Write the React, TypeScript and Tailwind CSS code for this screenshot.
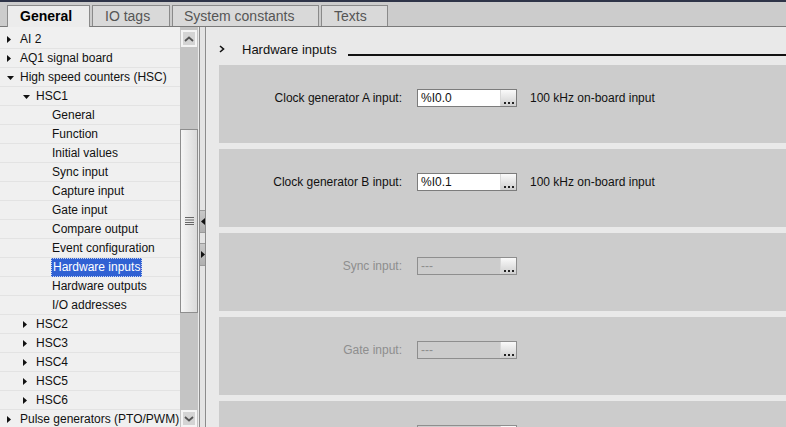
import React from "react";

type Row = { lvl: 0 | 1 | 2; tri?: "r" | "d"; text: string; sel?: boolean };

const rows: Row[] = [
  { lvl: 0, tri: "r", text: "AI 2" },
  { lvl: 0, tri: "r", text: "AQ1 signal board" },
  { lvl: 0, tri: "d", text: "High speed counters (HSC)" },
  { lvl: 1, tri: "d", text: "HSC1" },
  { lvl: 2, text: "General" },
  { lvl: 2, text: "Function" },
  { lvl: 2, text: "Initial values" },
  { lvl: 2, text: "Sync input" },
  { lvl: 2, text: "Capture input" },
  { lvl: 2, text: "Gate input" },
  { lvl: 2, text: "Compare output" },
  { lvl: 2, text: "Event configuration" },
  { lvl: 2, text: "Hardware inputs", sel: true },
  { lvl: 2, text: "Hardware outputs" },
  { lvl: 2, text: "I/O addresses" },
  { lvl: 1, tri: "r", text: "HSC2" },
  { lvl: 1, tri: "r", text: "HSC3" },
  { lvl: 1, tri: "r", text: "HSC4" },
  { lvl: 1, tri: "r", text: "HSC5" },
  { lvl: 1, tri: "r", text: "HSC6" },
  { lvl: 0, tri: "r", text: "Pulse generators (PTO/PWM)" },
];

function Tri({ dir }: { dir: "r" | "d" }) {
  return dir === "r" ? (
    <svg width="16" height="19" viewBox="0 0 16 19">
      <path d="M3 6 L7 9.5 L3 13 Z" fill="#111" />
    </svg>
  ) : (
    <svg width="16" height="19" viewBox="0 0 16 19">
      <path d="M3 8 L10 8 L6.5 12 Z" fill="#111" />
    </svg>
  );
}

function TreeRow({ r }: { r: Row }) {
  const pl = r.lvl === 0 ? "pl-[4px]" : r.lvl === 1 ? "pl-[20px]" : "pl-[51px]";
  return (
    <div className={`h-[19px] shrink-0 border-b border-[#e3e3e3] flex items-center ${pl}`}>
      {r.tri && <Tri dir={r.tri} />}
      {r.sel ? (
        <span className="h-[19px] px-[1px] flex items-center bg-[#3061d3] text-white border border-dotted border-[#c8d4f0] leading-none">
          {r.text}
        </span>
      ) : (
        <span className={r.lvl === 2 ? "pl-[1px]" : ""}>{r.text}</span>
      )}
    </div>
  );
}

function Dots() {
  return (
    <svg width="16" height="16" viewBox="0 0 16 16">
      <rect x="3" y="12" width="2" height="2" fill="#222" />
      <rect x="7" y="12" width="2" height="2" fill="#222" />
      <rect x="11" y="12" width="2" height="2" fill="#222" />
    </svg>
  );
}

function Field({
  label,
  value,
  note,
  disabled,
}: {
  label: string;
  value: string;
  note?: string;
  disabled?: boolean;
}) {
  const c = disabled ? "text-[#8e8e8e]" : "text-[#111]";
  return (
    <div className="h-[78px] mb-[6px] shrink-0 bg-[#cccccc] pt-[24px]">
      <div className="h-[18px] flex items-center">
        <div className={`w-[183px] text-right ${c}`}>{label}</div>
        <div
          className={`ml-[15px] w-[100px] h-[18px] flex border ${
            disabled ? "border-[#8e8e8e] bg-[#cccccc]" : "border-[#7c7c7c] bg-white"
          }`}
        >
          <div className={`flex-1 pl-[3px] leading-[16px] ${c}`}>{value}</div>
          <div className="w-[16px] h-full bg-gradient-to-b from-[#fafafa] to-[#cfcfcf] border-l border-[#d8d8d8]">
            <Dots />
          </div>
        </div>
        {note && <div className="ml-[13px] text-[#111]">{note}</div>}
      </div>
    </div>
  );
}

export default function App() {
  return (
    <div
      className="w-[786px] h-[427px] overflow-hidden flex flex-col bg-[#e9e9e9] text-[12px]"
      style={{ fontFamily: '"Liberation Sans", Arial, sans-serif' }}
    >
      <div className="h-[2px] bg-[#2e3448] shrink-0" />
      <div className="h-[25px] shrink-0 bg-[#cccccc] border-b border-[#7a7a7a] flex items-end pl-[7px] gap-[2px] text-[14px]">
        <div className="w-[83px] h-[22px] -mb-px bg-[#ececec] border border-b-0 border-[#8a8a8a] pl-[12px] flex items-center font-bold text-black">
          General
        </div>
        <div className="w-[78px] h-[21px] bg-[#d9d9d9] border border-b-0 border-[#8a8a8a] pl-[12px] flex items-center text-[#555]">
          IO tags
        </div>
        <div className="w-[147px] h-[21px] bg-[#d9d9d9] border border-b-0 border-[#8a8a8a] pl-[11px] flex items-center text-[#555]">
          System constants
        </div>
        <div className="w-[67px] h-[21px] bg-[#d9d9d9] border border-b-0 border-[#8a8a8a] pl-[12px] flex items-center text-[#555]">
          Texts
        </div>
      </div>

      <div className="flex flex-1 min-h-0">
        {/* Tree */}
        <div className="w-[180px] shrink-0 bg-[#f0f0f0] pt-[3px] flex flex-col overflow-hidden text-[#111]">
          {rows.map((r, i) => (
            <TreeRow key={i} r={r} />
          ))}
        </div>

        {/* Scrollbar */}
        <div className="w-[18px] shrink-0 bg-[#c4c4c4] flex flex-col pt-[3px]">
          <div className="h-[17px] mx-[1px] border-2 border-[#f4f4f4] bg-[#d4d4d4] flex items-center justify-center">
            <svg width="10" height="6" viewBox="0 0 10 6">
              <path d="M1 5 L5 1.5 L9 5" stroke="#555" strokeWidth="1.8" fill="none" />
            </svg>
          </div>
          <div className="h-[82px] shrink-0" />
          <div className="h-[184px] shrink-0 border border-[#8e8e8e] bg-gradient-to-r from-[#f6f6f6] to-[#dadada] flex items-center justify-center">
            <svg width="9" height="8" viewBox="0 0 9 8">
              <path d="M0 0.5 H9 M0 3 H9 M0 5.5 H9 M0 7.5 H9" stroke="#666" strokeWidth="1" />
            </svg>
          </div>
          <div className="flex-1" />
          <div className="h-[17px] mx-[1px] border-2 border-[#f4f4f4] bg-[#d4d4d4] flex items-center justify-center">
            <svg width="10" height="6" viewBox="0 0 10 6">
              <path d="M1 1 L5 4.5 L9 1" stroke="#555" strokeWidth="1.8" fill="none" />
            </svg>
          </div>
        </div>

        {/* Splitter */}
        <div className="w-[9px] shrink-0 bg-[#ebebeb] pl-[1px] pr-[1px]">
          <div className="h-full border-x border-[#8c8c8c] bg-[#e4e4e4] flex flex-col">
            <div className="h-[183px] shrink-0" />
            <div className="h-[23px] shrink-0 bg-gradient-to-b from-[#c8c8c8] to-[#b0b0b0] border-y border-[#9a9a9a] flex items-center justify-center">
              <svg width="4" height="7" viewBox="0 0 4 7">
                <path d="M4 0 L0 3.5 L4 7 Z" fill="#111" />
              </svg>
            </div>
            <div className="h-[10px] shrink-0" />
            <div className="h-[23px] shrink-0 bg-gradient-to-b from-[#c8c8c8] to-[#b0b0b0] border-y border-[#9a9a9a] flex items-center justify-center">
              <svg width="4" height="7" viewBox="0 0 4 7">
                <path d="M0 0 L4 3.5 L0 7 Z" fill="#111" />
              </svg>
            </div>
          </div>
        </div>

        {/* Right panel */}
        <div className="flex-1 min-w-0 pl-[12px] flex flex-col overflow-hidden">
          <div className="h-[38px] shrink-0 flex items-start pt-[15px]">
            <svg width="6" height="8" viewBox="0 0 6 8" className="mt-[3px]">
              <path d="M1 1 L4.5 4 L1 7" stroke="#111" strokeWidth="1.6" fill="none" />
            </svg>
            <span className="ml-[17px] text-[13px] leading-[15px] text-[#111]">Hardware inputs</span>
            <div className="flex-1 ml-[11px] mt-[12px] h-[2px] bg-[#111]" />
          </div>
          <Field label="Clock generator A input:" value="%I0.0" note="100 kHz on-board input" />
          <Field label="Clock generator B input:" value="%I0.1" note="100 kHz on-board input" />
          <Field label="Sync input:" value="---" disabled />
          <Field label="Gate input:" value="---" disabled />
          <Field label="" value="" disabled />
        </div>
      </div>
    </div>
  );
}
